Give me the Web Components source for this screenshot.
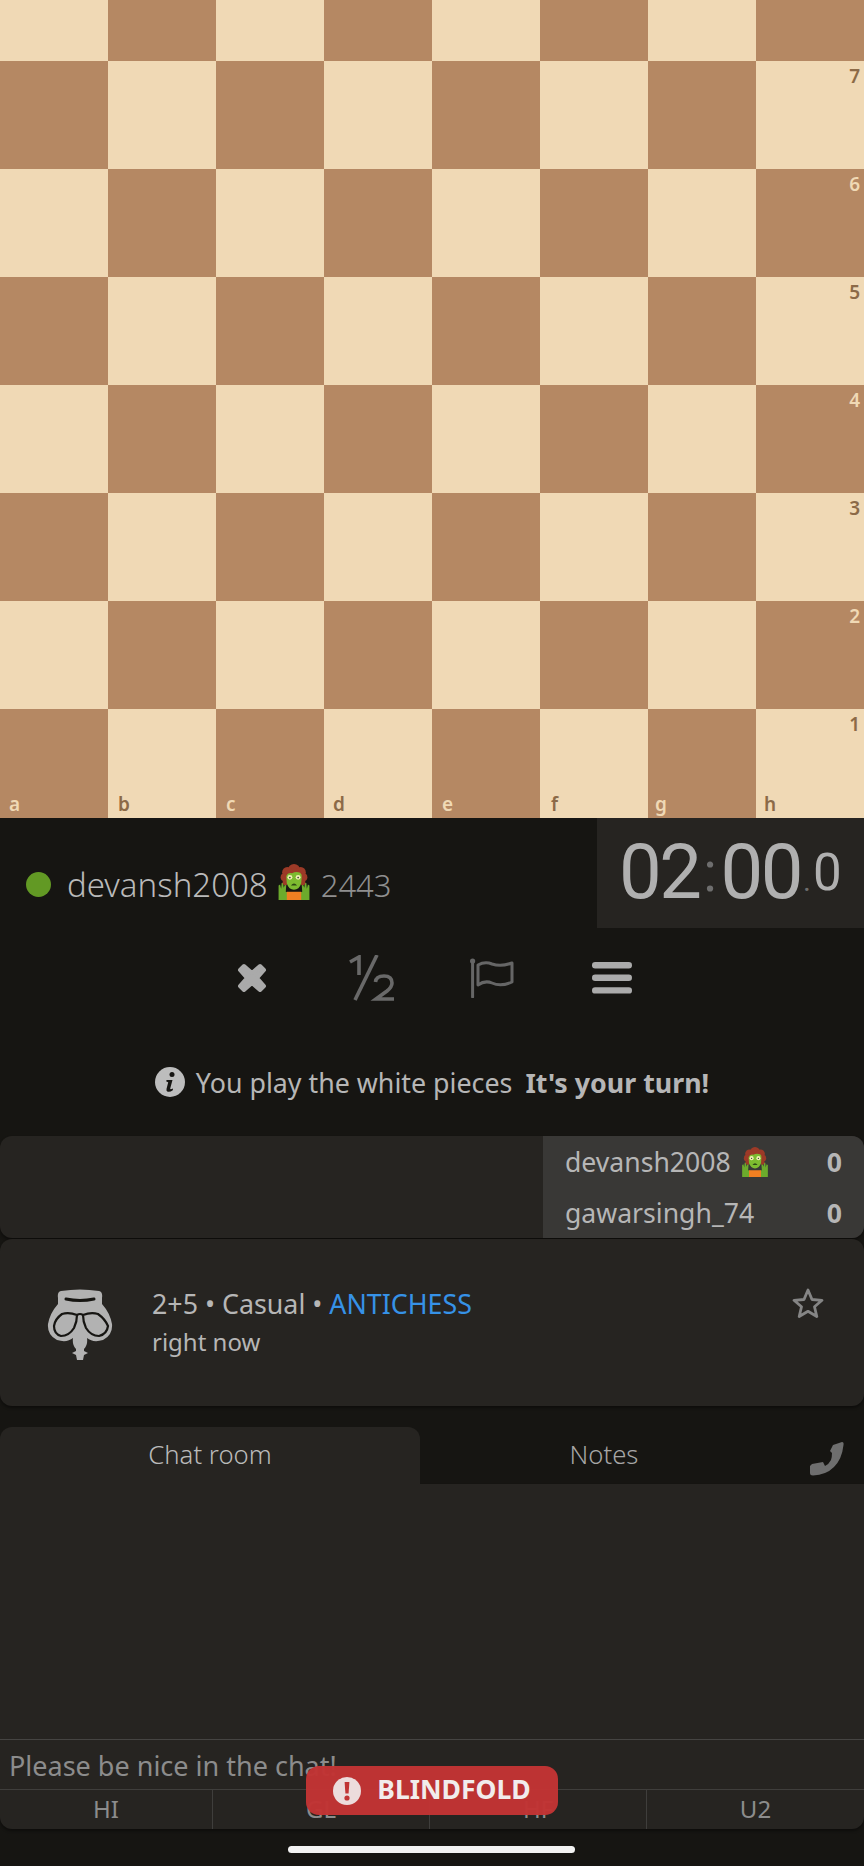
<!DOCTYPE html>
<html>
<head>
<meta charset="utf-8">
<title>Game</title>
<style>
  html, body { margin: 0; padding: 0; background: #161512; }
  body { width: 864px; height: 1866px; overflow: hidden; font-family: "Noto Sans", sans-serif; color: #b6b6b6; }
</style>
</head>
<body>
<template id="zombie-icon">
  <svg viewBox="0 0 30 35" width="30" height="35">
    <path d="M0 35 L0 21 L1.5 20 L2.5 24 L3 18.5 L4.5 18.5 L5 23 L6.5 19 L7.5 20 L7 27 L10 28 L20 28 L23 27 L22.5 20 L23.5 19 L25 23 L25.5 18.5 L27 18.5 L27.5 24 L28.5 20 L30 21 L30 35Z" fill="#6cab2c"/>
    <path d="M8 27 H22 V35 H8Z" fill="#f07f22"/>
    <g fill="#9c3a27">
      <circle cx="15" cy="6" r="6"/><circle cx="8.5" cy="8" r="5"/><circle cx="21.5" cy="8" r="5"/>
      <circle cx="6" cy="13" r="4"/><circle cx="24" cy="13" r="4"/><circle cx="6.5" cy="18" r="2.6"/><circle cx="23.5" cy="18" r="2.6"/>
    </g>
    <path d="M7.5 12 Q9 8 13 9 Q17 7 21 8.5 Q23 10 22.5 13 L22 19 Q20 25 15 25 Q10 25 8 19Z" fill="#7dbb30"/>
    <circle cx="11" cy="13" r="2.4" fill="#eef0b0"/>
    <circle cx="19" cy="13" r="2.4" fill="#eef0b0"/>
    <circle cx="11" cy="13.2" r=".8" fill="#333"/>
    <circle cx="19" cy="13.2" r=".8" fill="#333"/>
    <path d="M12 21 Q15 17 18 21Z" fill="#2e4a14"/>
  </svg>
</template>

<template id="game-board-tpl">
  <style>
    :host { display: block; width: 864px; height: 818px; overflow: hidden; }
    .board {
      display: grid;
      grid-template-columns: repeat(8, 108px);
      grid-template-rows: 61px repeat(6, 108px) 109px;
      font: 600 19px "Noto Sans", sans-serif;
    }
    .sq { position: relative; background: #f0d9b5; color: #8c6a47; }
    .sq.dark { background: #b58863; color: #f0d9b5; }
    .rank { position: absolute; top: 4px; right: 4px; line-height: 22px; }
    .file { position: absolute; bottom: 2px; line-height: 24px; }
  </style>
  <div class="board"></div>
</template>

<template id="player-bar-tpl">
  <style>
    :host { display: flex; height: 110px; align-items: stretch; justify-content: space-between; }
    .who { display: flex; align-items: center; padding: 23px 0 0 26px; font-size: 33px; font-weight: 300; color: #bababa; }
    .dot { width: 25px; height: 25px; border-radius: 50%; background: #629924; margin-right: 16px; }
    .emoji { display: flex; margin: -5px 10px 0 9px; }
    .rating { color: #8f8f8f; font-size: 31px; }
    .clock {
      width: 267px; background: #262421; box-sizing: border-box; padding: 0 0 0 22px;
      display: flex; align-items: baseline; font: 400 76px/108px Roboto, sans-serif; letter-spacing: -2.5px; color: #b0b0b0;
    }
    .sep { font-size: 56px; width: 21px; text-align: center; color: #6e6e6e; position: relative; top: -7px; letter-spacing: 0; }
    .tenth { font-size: 51px; position: relative; top: -8px; letter-spacing: 0; }
    .dotsep { font-size: 30px; width: 12px; text-align: center; color: #6e6e6e; position: relative; top: -7px; letter-spacing: 0; }
  </style>
  <div class="who">
    <span class="dot"></span><span>devansh2008</span><span class="emoji"></span><span class="rating">2443</span>
  </div>
  <div class="clock"><span>02</span><span class="sep">:</span><span>00</span><span class="dotsep">.</span><span class="tenth">0</span></div>
</template>

<template id="game-actions-tpl">
  <style>
    :host { display: flex; height: 100px; justify-content: center; align-items: center; }
    .row { display: flex; width: 480px; height: 60px; }
    .btn { flex: 1; display: flex; align-items: center; justify-content: center; }
    svg { display: block; }
  </style>
  <div class="row">
    <div class="btn"><svg width="32" height="32" viewBox="0 0 32 32"><path d="M4 8 L8 4 L16 11 L24 4 L28 8 L21 16 L28 24 L24 28 L16 21 L8 28 L4 24 L11 16Z" fill="#aaa" stroke="#aaa" stroke-width="4" stroke-linejoin="round"/></svg></div>
    <div class="btn"><svg width="46" height="46" viewBox="0 0 46 46" fill="none" stroke="#696969" stroke-width="3.6"><path d="M1 7 L10 2 V20"/><path d="M6 45 L28 0"/><path d="M26.5 27 Q27 21 35 21 Q43 21 43 28 Q43 32 38 36 L27 44 H45"/></svg></div>
    <div class="btn"><svg width="44" height="40" viewBox="0 0 44 40" fill="none" stroke="#666" stroke-width="3"><circle cx="2.6" cy="3" r="2.6" fill="#666" stroke="none"/><path d="M2.6 4 V39" stroke-linecap="round"/><path d="M8 7 Q15 3 22 6 Q31 9 42 5 V24 Q31 29 22 25 Q15 22 8 27Z" stroke-linejoin="round"/></svg></div>
    <div class="btn"><svg width="40" height="32" viewBox="0 0 40 32" fill="#ababab"><rect y="0" width="40" height="6.4" rx="3.2"/><rect y="12.6" width="40" height="6.4" rx="3.2"/><rect y="25.2" width="40" height="6.4" rx="3.2"/></svg></div>
  </div>
</template>

<template id="game-status-tpl">
  <style>
    :host { display: flex; height: 108px; align-items: center; justify-content: center; font-size: 26.8px; color: #b6b6b6; }
    svg { display: block; margin-right: 11px; }
    b { font-weight: 700; margin-left: 13px; font-size: 26.8px; }
  </style>
  <svg width="30" height="30" viewBox="0 0 30 30"><circle cx="15" cy="15" r="15" fill="#bdbdbd"/><circle cx="17" cy="7.5" r="2.5" fill="#161512"/><path d="M11.5 13 H17.5 L15.2 21.5 Q15 23 18 21.5 L17.8 23.3 Q15 25.3 12.7 24.7 Q11 24 11.5 22 L13.2 15.2 L11.3 14.6Z" fill="#161512"/></svg>
  <span>You play the white pieces</span><b>It's your turn!</b>
</template>

<template id="cross-table-tpl">
  <style>
    :host { display: flex; height: 102px; background: #262421; border-radius: 12px; overflow: hidden; justify-content: flex-end; box-shadow: 0 2px 3px rgba(0,0,0,.4); font-size: 26.6px; color: #b6b6b6; }
    .side { width: 321px; background: #393836; box-sizing: border-box; padding: 0 22px; display: flex; flex-direction: column; }
    .row { flex: 1; display: flex; align-items: center; gap: 10px; }
    .row span.emoji { display: flex; }
    .score { margin-left: auto; font-weight: 700; }
  </style>
  <div class="side">
    <div class="row"><span>devansh2008</span><span class="emoji"></span><span class="score">0</span></div>
    <div class="row"><span>gawarsingh_74</span><span class="score">0</span></div>
  </div>
</template>

<template id="game-meta-tpl">
  <style>
    :host { display: flex; height: 167px; margin-top: 1px; background: #262421; border-radius: 12px; box-shadow: 0 2px 3px rgba(0,0,0,.4); box-sizing: border-box; padding: 0 40px 0 47px; align-items: center; font-size: 26.8px; color: #b6b6b6; }
    .icon { display: block; margin-right: 39px; margin-top: 4px; }
    .txt { flex: 1; line-height: 39px; margin-top: -1px; }
    .variant { color: #3692e7; }
    .ago { font-size: 24px; margin-top: -1px; }
    .star { display: block; margin-top: -40px; }
  </style>
  <svg class="icon" width="66" height="72" viewBox="0 0 66 72">
    <path d="M14 2 Q33 -1 52 2 Q56 3 55 9 L55 15 Q63 24 65 35 Q66 46 56 51 Q46 54 40 49 Q41 56 37 60 L37 62 L41 64 L37 66 L36 71 L30 71 L29 66 L25 64 L29 62 L29 60 Q25 56 26 49 Q20 54 10 51 Q0 46 1 35 Q3 24 11 15 L11 9 Q10 3 14 2Z" fill="#b2b2b2"/>
    <path d="M19 10 Q33 13 47 10" fill="none" stroke="#161512" stroke-width="3" stroke-linecap="round"/>
    <path d="M15 25 Q8 30 7 37 Q7 45 14 47 Q22 47 27 39 Q30 33 30 26 Q22 23 15 25Z" fill="none" stroke="#161512" stroke-width="2.2"/>
    <path d="M51 25 Q58 30 61 37 Q60 45 52 47 Q44 47 39 39 Q36 33 36 26 Q44 23 51 25Z" fill="none" stroke="#161512" stroke-width="2.2"/>
    <path d="M30 26 Q33 24 36 26" fill="none" stroke="#161512" stroke-width="2.2"/>
  </svg>
  <div class="txt"><div>2+5 • Casual • <span class="variant">ANTICHESS</span></div><div class="ago">right now</div></div>
  <svg class="star" width="32" height="30" viewBox="0 0 32 30" fill="none" stroke="#858585" stroke-width="2.8" stroke-linejoin="round"><path d="M16 2 L20 11.5 L30 12.3 L22.5 18.7 L24.8 28.5 L16 23.3 L7.2 28.5 L9.5 18.7 L2 12.3 L12 11.5Z"/></svg>
</template>

<template id="chat-panel-tpl">
  <style>
    :host { display: block; margin-top: 21px; font-size: 25.7px; font-weight: 300; color: #bababa; }
    .tabs { display: flex; height: 57px; position: relative; }
    .tab { display: flex; align-items: center; justify-content: center; padding-bottom: 3px; box-sizing: border-box; }
    .tab.on { width: 420px; background: #262421; border-radius: 12px 12px 0 0; }
    .tab.off { flex: 1; color: #a6a6a6; padding-right: 76px; }
    .phone { display: block; position: absolute; right: 20px; top: 15px; }
    .body { background: #262421; border-radius: 0 0 12px 12px; box-shadow: 0 2px 3px rgba(0,0,0,.4); display: flex; flex-direction: column; height: 345px; font-weight: 400; }
    .log { flex: 1; border-bottom: 1px solid #454442; }
    .say { height: 50px; box-sizing: border-box; display: flex; align-items: center; padding: 1px 0 0 9px; font-size: 27px; color: #8c8c8c; border-bottom: 1px solid #3f3e3c; }
    .presets { display: grid; grid-template-columns: 212px 217px 217px 218px; height: 39px; }
    .presets span { display: flex; align-items: center; justify-content: center; box-sizing: border-box; padding-bottom: 2px; font-size: 24px; color: #8c8c8c; border-left: 1px solid #3f3e3c; }
    .presets span:first-child { border-left: 0; }
  </style>
  <div class="tabs">
    <div class="tab on">Chat room</div>
    <div class="tab off">Notes</div>
    <svg class="phone" width="34" height="34" viewBox="0 0 34 34"><path d="M23 3 L32 0 Q34 0 33.5 3 Q32 17 24 25 Q16 33 3 33.5 Q0 33.5 0 31 L0 24 L2 22 L13 20 L15 24 Q19 22 21 18 Q22 15 22 11 L20 9Z" fill="#6e6e6e"/></svg>
  </div>
  <div class="body">
    <div class="log"></div>
    <div class="say">Please be nice in the chat!</div>
    <div class="presets"><span>HI</span><span>GL</span><span>HF</span><span>U2</span></div>
  </div>
</template>

<template id="blindfold-toast-tpl">
  <style>
    :host { position: absolute; left: 306px; top: 1766px; width: 252px; height: 49px; box-sizing: border-box; background: rgba(193,52,52,.98); border-radius: 13px; display: flex; align-items: center; justify-content: center; gap: 16px; color: #f1ecec; font-size: 26.5px; font-weight: 700; }
    svg { display: block; }
    span { margin-top: -4px; }
  </style>
  <svg width="28" height="28" viewBox="0 0 28 28"><circle cx="14" cy="14" r="14" fill="#ecdcdc"/><path d="M11.6 5 H16.4 L15.6 16.5 H12.4Z" fill="#c13434"/><circle cx="14" cy="21" r="2.6" fill="#c13434"/></svg>
  <span>BLINDFOLD</span>
</template>

<template id="home-bar-tpl">
  <style>
    :host { position: absolute; left: 288px; top: 1846px; width: 287px; height: 7px; border-radius: 4px; background: #f2f2f2; display: block; }
  </style>
</template>

<game-board></game-board>
<player-bar></player-bar>
<game-actions></game-actions>
<game-status></game-status>
<cross-table></cross-table>
<game-meta></game-meta>
<chat-panel></chat-panel>
<blindfold-toast></blindfold-toast>
<home-bar></home-bar>

<script>
function stamp(el, id) {
  const root = el.attachShadow({ mode: "open" });
  root.appendChild(document.getElementById(id).content.cloneNode(true));
  return root;
}
function zombie(w, h) {
  const svg = document.getElementById("zombie-icon").content.cloneNode(true);
  svg.firstElementChild.setAttribute("width", w);
  svg.firstElementChild.setAttribute("height", h);
  return svg;
}

class GameBoard extends HTMLElement {
  connectedCallback() {
    const root = stamp(this, "game-board-tpl");
    const board = root.querySelector(".board");
    const files = "abcdefgh";
    const fileLeft = [9, 10, 10, 9, 10, 11, 7, 8];
    for (let r = 0; r < 8; r++) {
      for (let c = 0; c < 8; c++) {
        const sq = document.createElement("div");
        sq.className = (r + c) % 2 ? "sq dark" : "sq";
        if (c === 7 && r > 0) sq.innerHTML = `<span class="rank">${8 - r}</span>`;
        if (r === 7) sq.innerHTML += `<span class="file" style="left:${fileLeft[c]}px">${files[c]}</span>`;
        board.append(sq);
      }
    }
  }
}

class PlayerBar extends HTMLElement {
  connectedCallback() {
    const root = stamp(this, "player-bar-tpl");
    root.querySelector(".emoji").append(zombie(34, 36));
  }
}

class GameActions extends HTMLElement {
  connectedCallback() { stamp(this, "game-actions-tpl"); }
}

class GameStatus extends HTMLElement {
  connectedCallback() { stamp(this, "game-status-tpl"); }
}

class CrossTable extends HTMLElement {
  connectedCallback() {
    const root = stamp(this, "cross-table-tpl");
    root.querySelector(".emoji").append(zombie(28, 30));
  }
}

class GameMeta extends HTMLElement {
  connectedCallback() { stamp(this, "game-meta-tpl"); }
}

class ChatPanel extends HTMLElement {
  connectedCallback() { stamp(this, "chat-panel-tpl"); }
}

class BlindfoldToast extends HTMLElement {
  connectedCallback() { stamp(this, "blindfold-toast-tpl"); }
}

class HomeBar extends HTMLElement {
  connectedCallback() { stamp(this, "home-bar-tpl"); }
}

customElements.define("game-board", GameBoard);
customElements.define("player-bar", PlayerBar);
customElements.define("game-actions", GameActions);
customElements.define("game-status", GameStatus);
customElements.define("cross-table", CrossTable);
customElements.define("game-meta", GameMeta);
customElements.define("chat-panel", ChatPanel);
customElements.define("blindfold-toast", BlindfoldToast);
customElements.define("home-bar", HomeBar);
</script>
</body>
</html>
